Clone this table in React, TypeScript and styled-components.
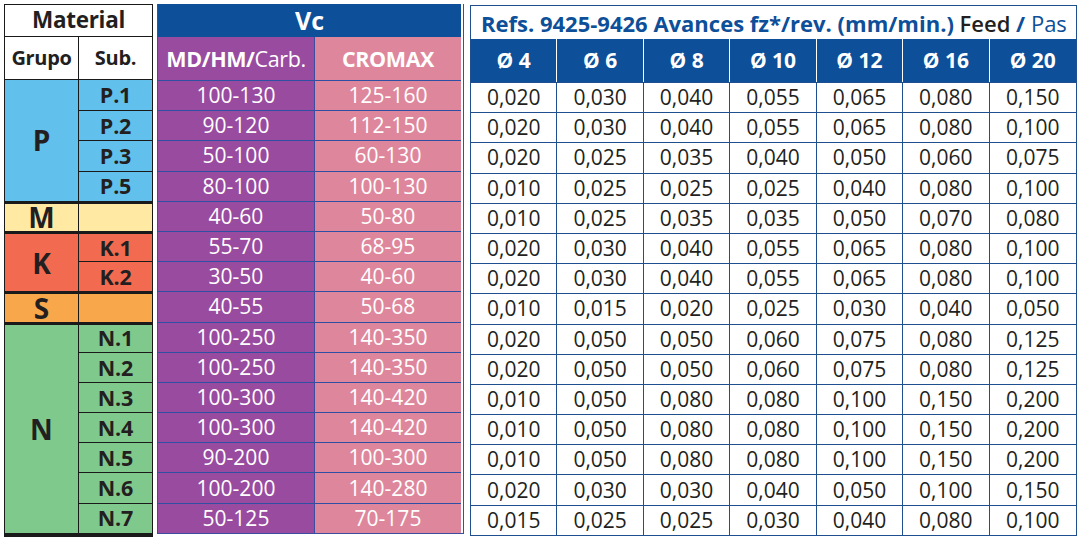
import React from "react";
import styled, { createGlobalStyle } from "styled-components";

const GlobalStyle = createGlobalStyle`
  html, body { margin: 0; padding: 0; background: #ffffff; }
  body { font-family: "Open Sans", "Noto Sans", sans-serif; color: #231f20; }
`;

const ROWS = "33px 43px repeat(15, 30.2px)";
const BLUE = "#0d4f98";
const LINE = "#1f4f8f";
const INK = "#231f20";

const Page = styled.div`
  display: flex;
  align-items: flex-start;
  padding: 4px 0 0 4px;
  width: 1080px;
  height: 538px;
  box-sizing: border-box;
  overflow: hidden;
`;

/* ---------- Material table ---------- */
const MaterialGrid = styled.div`
  display: grid;
  grid-template-columns: 75px 74px;
  grid-template-rows: ${ROWS};
  width: 149px;
  border-bottom: 4px solid #1a1a1a;
`;

const Cell = styled.div`
  display: flex;
  align-items: center;
  justify-content: center;
  box-sizing: border-box;
  white-space: nowrap;
  line-height: 1;
`;

const MaterialTitle = styled(Cell)`
  grid-column: 1 / span 2;
  border: 1px solid #1a1a1a;
  font-weight: 700;
  font-size: 22.5px;
  letter-spacing: -0.3px;
  color: ${INK};
`;

const SubHead = styled(Cell)<{ $left?: boolean }>`
  border-bottom: 1px solid #1a1a1a;
  border-right: 1px solid #1a1a1a;
  border-left: ${(p) => (p.$left ? "1px solid #1a1a1a" : "none")};
  font-weight: 700;
  font-size: 20px;
  letter-spacing: -0.3px;
  color: ${INK};
`;

const GroupCell = styled(Cell)<{ $bg: string; $start: number; $span: number; $thick: boolean }>`
  grid-column: 1;
  grid-row: ${(p) => p.$start} / span ${(p) => p.$span};
  background: ${(p) => p.$bg};
  border-left: 1px solid #1a1a1a;
  border-right: 1px solid #1a1a1a;
  border-top: ${(p) => (p.$thick ? "3px solid #1a1a1a" : "none")};
  font-weight: 700;
  font-size: 28px;
  color: ${INK};
`;

const SubCell = styled(Cell)<{ $bg: string; $row: number; $top: "none" | "thin" | "thick" }>`
  grid-column: 2;
  grid-row: ${(p) => p.$row};
  background: ${(p) => p.$bg};
  border-right: 1px solid #1a1a1a;
  border-top: ${(p) =>
    p.$top === "thick" ? "3px solid #1a1a1a" : p.$top === "thin" ? "1px solid #1a1a1a" : "none"};
  font-weight: 700;
  font-size: 21.5px;
  letter-spacing: -0.2px;
  color: ${INK};
`;

/* ---------- Vc table ---------- */
const VcGrid = styled.div`
  display: grid;
  grid-template-columns: 157px 146px;
  grid-template-rows: ${ROWS};
  width: 305px;
  margin-left: 4px;
  border: 1px solid #3d4c9e;
  border-top: none;
  box-sizing: content-box;
`;

const VcTitle = styled(Cell)`
  grid-column: 1 / span 2;
  background: ${BLUE};
  color: #ffffff;
  font-weight: 700;
  font-size: 25px;
`;

const VcHead = styled(Cell)<{ $bg: string; $divider?: boolean }>`
  background: ${(p) => p.$bg};
  color: #ffffff;
  font-size: 21.5px;
  letter-spacing: -0.4px;
  border-right: ${(p) => (p.$divider ? "1px solid #3d4c9e" : "none")};
  b { font-weight: 700; }
  span { font-weight: 400; }
`;

const VcCell = styled(Cell)<{ $bg: string; $divider?: boolean }>`
  background: ${(p) => p.$bg};
  color: #ffffff;
  font-size: 21px;
  border-top: 1px solid #2f4fa2;
  border-right: ${(p) => (p.$divider ? "1px solid #3d4c9e" : "none")};
`;

/* ---------- Feed table ---------- */
const FeedGrid = styled.div`
  display: grid;
  grid-template-columns: repeat(7, 1fr);
  grid-template-rows: ${ROWS};
  width: 605px;
  margin-left: 6px;
  border: 1px solid ${LINE};
  box-sizing: content-box;
  margin-top: 1px;
`;

const FeedTitle = styled(Cell)`
  grid-column: 1 / span 7;
  justify-content: flex-start;
  padding-left: 10px;
  background: #ffffff;
  color: ${BLUE};
  font-size: 22px;
  letter-spacing: 0;
  font-weight: 700;
  em { font-style: normal; color: ${INK}; font-weight: 600; }
  i { font-style: normal; font-weight: 400; }
`;

const DiamCell = styled(Cell)<{ $last?: boolean }>`
  background: ${BLUE};
  color: #ffffff;
  font-weight: 700;
  font-size: 21px;
  border-right: ${(p) => (p.$last ? "none" : "1px solid #ffffff")};
`;

const FeedCell = styled(Cell)<{ $last?: boolean }>`
  background: #ffffff;
  color: ${INK};
  font-size: 21px;
  border-top: 1px solid ${LINE};
  border-right: ${(p) => (p.$last ? "none" : `1px solid ${LINE}`)};
`;

/* ---------- data ---------- */
const PURPLE = "#984b9f";
const PINK = "#de879c";

type Group = { name: string; color: string; subs: string[] };
const groups: Group[] = [
  { name: "P", color: "#62c1ec", subs: ["P.1", "P.2", "P.3", "P.5"] },
  { name: "M", color: "#ffe9a3", subs: [""] },
  { name: "K", color: "#f26b50", subs: ["K.1", "K.2"] },
  { name: "S", color: "#f9a74b", subs: [""] },
  { name: "N", color: "#80c98d", subs: ["N.1", "N.2", "N.3", "N.4", "N.5", "N.6", "N.7"] },
];

const vc: [string, string][] = [
  ["100-130", "125-160"],
  ["90-120", "112-150"],
  ["50-100", "60-130"],
  ["80-100", "100-130"],
  ["40-60", "50-80"],
  ["55-70", "68-95"],
  ["30-50", "40-60"],
  ["40-55", "50-68"],
  ["100-250", "140-350"],
  ["100-250", "140-350"],
  ["100-300", "140-420"],
  ["100-300", "140-420"],
  ["90-200", "100-300"],
  ["100-200", "140-280"],
  ["50-125", "70-175"],
];

const diams = ["4", "6", "8", "10", "12", "16", "20"];

const feeds: string[][] = [
  ["0,020", "0,030", "0,040", "0,055", "0,065", "0,080", "0,150"],
  ["0,020", "0,030", "0,040", "0,055", "0,065", "0,080", "0,100"],
  ["0,020", "0,025", "0,035", "0,040", "0,050", "0,060", "0,075"],
  ["0,010", "0,025", "0,025", "0,025", "0,040", "0,080", "0,100"],
  ["0,010", "0,025", "0,035", "0,035", "0,050", "0,070", "0,080"],
  ["0,020", "0,030", "0,040", "0,055", "0,065", "0,080", "0,100"],
  ["0,020", "0,030", "0,040", "0,055", "0,065", "0,080", "0,100"],
  ["0,010", "0,015", "0,020", "0,025", "0,030", "0,040", "0,050"],
  ["0,020", "0,050", "0,050", "0,060", "0,075", "0,080", "0,125"],
  ["0,020", "0,050", "0,050", "0,060", "0,075", "0,080", "0,125"],
  ["0,010", "0,050", "0,080", "0,080", "0,100", "0,150", "0,200"],
  ["0,010", "0,050", "0,080", "0,080", "0,100", "0,150", "0,200"],
  ["0,010", "0,050", "0,080", "0,080", "0,100", "0,150", "0,200"],
  ["0,020", "0,030", "0,030", "0,040", "0,050", "0,100", "0,150"],
  ["0,015", "0,025", "0,025", "0,030", "0,040", "0,080", "0,100"],
];

function MaterialTable() {
  const cells: React.ReactNode[] = [];
  let row = 3;
  groups.forEach((g, gi) => {
    cells.push(
      <GroupCell
        key={`g-${g.name}`}
        $bg={g.color}
        $start={row}
        $span={g.subs.length}
        $thick={gi > 0}
      >
        {g.name}
      </GroupCell>
    );
    g.subs.forEach((s, si) => {
      cells.push(
        <SubCell
          key={`s-${g.name}-${si}`}
          $bg={g.color}
          $row={row + si}
          $top={si === 0 ? (gi > 0 ? "thick" : "none") : "thin"}
        >
          {s}
        </SubCell>
      );
    });
    row += g.subs.length;
  });
  return (
    <MaterialGrid>
      <MaterialTitle>Material</MaterialTitle>
      <SubHead $left>Grupo</SubHead>
      <SubHead>Sub.</SubHead>
      {cells}
    </MaterialGrid>
  );
}

function VcTable() {
  return (
    <VcGrid>
      <VcTitle>Vc</VcTitle>
      <VcHead $bg={PURPLE} $divider>
        <b>MD/HM/</b>
        <span>Carb.</span>
      </VcHead>
      <VcHead $bg={PINK}>
        <b>CROMAX</b>
      </VcHead>
      {vc.map(([a, b], i) => (
        <React.Fragment key={i}>
          <VcCell $bg={PURPLE} $divider>
            {a}
          </VcCell>
          <VcCell $bg={PINK}>{b}</VcCell>
        </React.Fragment>
      ))}
    </VcGrid>
  );
}

function FeedTable() {
  return (
    <FeedGrid>
      <FeedTitle>
        Refs. 9425-9426 Avances fz*/rev. (mm/min.)&nbsp;<em>Feed</em>&nbsp;/&nbsp;<i>Pas</i>
      </FeedTitle>
      {diams.map((d, i) => (
        <DiamCell key={d} $last={i === diams.length - 1}>
          Ø&nbsp;{d}
        </DiamCell>
      ))}
      {feeds.map((r, ri) =>
        r.map((v, ci) => (
          <FeedCell key={`${ri}-${ci}`} $last={ci === r.length - 1}>
            {v}
          </FeedCell>
        ))
      )}
    </FeedGrid>
  );
}

export default function App() {
  return (
    <>
      <GlobalStyle />
      <Page>
        <MaterialTable />
        <VcTable />
        <FeedTable />
      </Page>
    </>
  );
}
